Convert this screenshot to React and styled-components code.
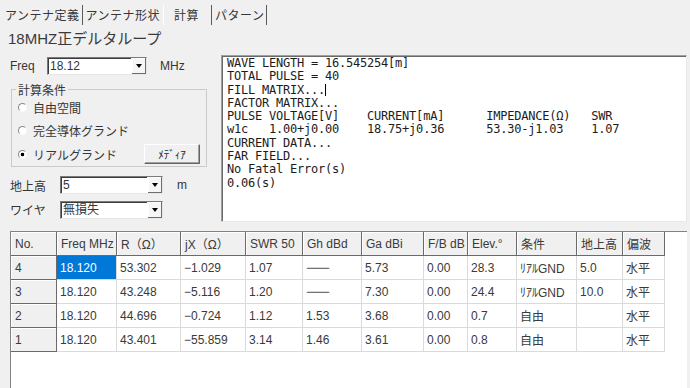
import React from 'react';
import styled, { createGlobalStyle } from 'styled-components';

const UI = `"Liberation Sans", "Noto Sans CJK JP", sans-serif`;
const JP = `"Noto Sans CJK JP", "Liberation Sans", sans-serif`;

const GlobalStyle = createGlobalStyle`
  html, body { margin: 0; padding: 0; background: #f0f0f0; }
  body { font-family: ${UI}; color: #333; }
  * { box-sizing: border-box; }
`;

const Window = styled.div`
  width: 690px;
  height: 388px;
  overflow: hidden;
  display: flex;
  flex-direction: column;
  background: #f0f0f0;
  font-family: ${UI};
  font-size: 12px;
  color: #363636;
`;

const TabBar = styled.div`
  display: flex;
  height: 26px;
  padding: 5px 0 0 2px;
  font-family: ${JP};
  font-size: 12px;
  letter-spacing: 0.5px;
  color: #363636;
`;

const Tab = styled.div`
  height: 20px;
  line-height: 20px;
  padding: ${p => (p.$active ? '0 12px 0 10px' : '0 2px 0 2px')};
  border-left: 1px solid ${p => (p.$active ? '#ffffff' : 'transparent')};
  border-right: 1px solid ${p => (p.$hideSep ? 'transparent' : '#5a5a5a')};
`;

const Page = styled.div`
  flex: 1;
  min-height: 0;
  display: flex;
  flex-direction: column;
  padding: 0 3px 0 10px;
`;

const Title = styled.div`
  height: 18px;
  line-height: 18px;
  margin: 4px 0 0 -2px;
  font-size: 15px;
  color: #3a3a3a;
`;

const Upper = styled.div`
  display: flex;
  height: 167px;
  margin-top: 7px;
`;

const LeftPanel = styled.div`
  width: 211px;
  flex: none;
  display: flex;
  flex-direction: column;
`;

const FormRow = styled.div`
  display: flex;
  align-items: center;
  height: ${p => p.$h || 25}px;
  margin-top: ${p => p.$mt || 0}px;
`;

const Label = styled.span`
  width: ${p => p.$w}px;
  flex: none;
  font-family: ${UI};
  font-size: 12px;
  white-space: nowrap;
`;

const Unit = styled.span`
  margin-left: ${p => p.$ml}px;
  font-size: 12px;
`;

const Combo = styled.div`
  display: flex;
  width: ${p => p.$w}px;
  height: 18px;
  background: #fff;
  border: 1px solid;
  border-color: #7a7a7a #e6e6e6 #e6e6e6 #7a7a7a;
  box-shadow: inset 1px 1px 0 #3c3c3c;
`;

const ComboText = styled.span`
  flex: 1;
  padding-left: 2px;
  line-height: 16px;
  font-size: 12px;
  white-space: nowrap;
  overflow: hidden;
`;

const DropButton = styled.span`
  width: 15px;
  flex: none;
  display: flex;
  align-items: center;
  justify-content: center;
  background: #f6f6f6;
  border-left: 1px solid #fff;
  box-shadow: inset -1px -1px 0 #6e6e6e, inset 1px 1px 0 #ffffff;
  &::after {
    content: '';
    border-left: 3.5px solid transparent;
    border-right: 3.5px solid transparent;
    border-top: 4px solid #000;
  }
`;

const GroupBox = styled.fieldset`
  width: 196px;
  margin: 8px 0 0 1px;
  padding: 0 6px 0 6px;
  border: 1px solid #cacaca;
  min-width: 0;
`;

const Legend = styled.legend`
  padding: 0 2px;
  margin-left: -2px;
  line-height: 12px;
  font-family: ${JP};
  font-size: 12px;
  color: #363636;
`;

const RadioRow = styled.label`
  display: flex;
  align-items: center;
  gap: 6px;
  height: 23.5px;
  font-family: ${JP};
  font-size: 12px;
`;

const RadioMark = styled.span`
  width: 9px;
  height: 9px;
  flex: none;
  border-radius: 50%;
  border: 1px solid;
  border-color: #8c8c8c #fafafa #fafafa #8c8c8c;
  background: ${p =>
    p.$checked
      ? 'radial-gradient(circle, #000 0 1.6px, #fff 2.1px)'
      : '#fff'};
`;

const PushButton = styled.button`
  margin-left: auto;
  width: 56px;
  height: 20px;
  padding: 0;
  background: #f0f0f0;
  border: 1px solid;
  border-color: #ffffff #646464 #646464 #ffffff;
  box-shadow: inset -1px -1px 0 #a0a0a0;
  font-family: ${JP};
  font-size: 11px;
  color: #222;
`;

const Console = styled.pre`
  flex: 1;
  margin: 0;
  padding: 1px 0 0 5px;
  background: #fff;
  border: 1px solid;
  border-color: #a0a0a0 #e8e8e8 #e8e8e8 #a0a0a0;
  box-shadow: inset 1px 1px 0 #696969;
  font-family: "DejaVu Sans Mono", monospace;
  font-size: 12px;
  letter-spacing: -0.22px;
  line-height: 13.3px;
  color: #1c1c1c;
  white-space: pre;
  overflow: hidden;
`;

const Caret = styled.span`
  display: inline-block;
  width: 1px;
  height: 12px;
  background: #000;
  vertical-align: -2px;
`;

const Grid = styled.div`
  flex: 1;
  min-height: 0;
  margin-top: 9px;
  background: #fff;
  border-left: 1px solid #828282;
  border-top: 1px solid #828282;
  overflow: hidden;
`;

const Table = styled.table`
  border-collapse: separate;
  border-spacing: 0;
  table-layout: fixed;
  width: 654px;
  font-size: 12px;
  color: #3a3a3a;
`;

const Row = styled.tr`
  height: 24px;
`;

const HeadCell = styled.th`
  background: #f0f0f0;
  border-right: 1px solid #6a6a6a;
  border-bottom: 1px solid #6a6a6a;
  box-shadow: inset 1px 1px 0 #ffffff;
  text-align: left;
  font-weight: normal;
  padding: 0 3px 0 4px;
  white-space: nowrap;
  overflow: hidden;
`;

const Cell = styled.td`
  background: ${p => (p.$selected ? '#0078d7' : '#fff')};
  color: ${p => (p.$selected ? '#fff' : '#3a3a3a')};
  border-right: 1px solid #dadada;
  border-bottom: 1px solid #dadada;
  padding: 0 3px;
  white-space: nowrap;
  overflow: hidden;
`;

const Dashes = styled.span`
  letter-spacing: -1.5px;
`;

const columns = [
  { title: 'No.', w: 46 },
  { title: 'Freq MHz', w: 60 },
  { title: 'R（Ω）', w: 64 },
  { title: 'jX（Ω）', w: 65 },
  { title: 'SWR 50', w: 57 },
  { title: 'Gh dBd', w: 59 },
  { title: 'Ga dBi', w: 62 },
  { title: 'F/B dB', w: 44 },
  { title: 'Elev.°', w: 49 },
  { title: '条件', w: 60 },
  { title: '地上高', w: 46 },
  { title: '偏波', w: 42 },
];

const rows = [
  ['4', '18.120', '53.302', '−1.029', '1.07', '---', '5.73', '0.00', '28.3', 'ﾘｱﾙGND', '5.0', '水平'],
  ['3', '18.120', '43.248', '−5.116', '1.20', '---', '7.30', '0.00', '24.4', 'ﾘｱﾙGND', '10.0', '水平'],
  ['2', '18.120', '44.696', '−0.724', '1.12', '1.53', '3.68', '0.00', '0.7', '自由', '', '水平'],
  ['1', '18.120', '43.401', '−55.859', '3.14', '1.46', '3.61', '0.00', '0.8', '自由', '', '水平'],
];

export default function App() {
  return (
    <>
      <GlobalStyle />
      <Window>
        <TabBar>
          <Tab>アンテナ定義</Tab>
          <Tab $hideSep>アンテナ形状</Tab>
          <Tab $active>計算</Tab>
          <Tab>パターン</Tab>
        </TabBar>
        <Page>
          <Title>18MHZ正デルタループ</Title>
          <Upper>
            <LeftPanel>
              <FormRow $h={20} $mt={1}>
                <Label $w={37}>Freq</Label>
                <Combo $w={100}>
                  <ComboText>18.12</ComboText>
                  <DropButton />
                </Combo>
                <Unit $ml={13}>MHz</Unit>
              </FormRow>
              <GroupBox>
                <Legend>計算条件</Legend>
                <RadioRow>
                  <RadioMark />
                  自由空間
                </RadioRow>
                <RadioRow>
                  <RadioMark />
                  完全導体グランド
                </RadioRow>
                <RadioRow>
                  <RadioMark $checked />
                  リアルグランド
                  <PushButton>ﾒﾃﾞｨｱ</PushButton>
                </RadioRow>
              </GroupBox>
              <FormRow $mt={6}>
                <Label $w={50}>地上高</Label>
                <Combo $w={103}>
                  <ComboText>5</ComboText>
                  <DropButton />
                </Combo>
                <Unit $ml={14}>m</Unit>
              </FormRow>
              <FormRow>
                <Label $w={50}>ワイヤ</Label>
                <Combo $w={103}>
                  <ComboText>無損失</ComboText>
                  <DropButton />
                </Combo>
              </FormRow>
            </LeftPanel>
            <Console>
              {'WAVE LENGTH = 16.545254[m]\n'}
              {'TOTAL PULSE = 40\n'}
              {'FILL MATRIX...'}
              <Caret />
              {'\n'}
              {'FACTOR MATRIX...\n'}
              {'PULSE VOLTAGE[V]    CURRENT[mA]      IMPEDANCE(Ω)   SWR\n'}
              {'w1c   1.00+j0.00    18.75+j0.36      53.30-j1.03    1.07\n'}
              {'CURRENT DATA...\n'}
              {'FAR FIELD...\n'}
              {'No Fatal Error(s)\n'}
              {'0.06(s)'}
            </Console>
          </Upper>
          <Grid>
            <Table>
              <colgroup>
                {columns.map(c => (
                  <col key={c.title} style={{ width: c.w }} />
                ))}
              </colgroup>
              <thead>
                <Row>
                  {columns.map(c => (
                    <HeadCell key={c.title}>{c.title}</HeadCell>
                  ))}
                </Row>
              </thead>
              <tbody>
                {rows.map((r, ri) => (
                  <Row key={r[0]}>
                    <HeadCell as="td">{r[0]}</HeadCell>
                    {r.slice(1).map((v, ci) => (
                      <Cell key={ci} $selected={ri === 0 && ci === 0}>
                        {v === '---' ? <Dashes>−−−−</Dashes> : v}
                      </Cell>
                    ))}
                  </Row>
                ))}
              </tbody>
            </Table>
          </Grid>
        </Page>
      </Window>
    </>
  );
}
